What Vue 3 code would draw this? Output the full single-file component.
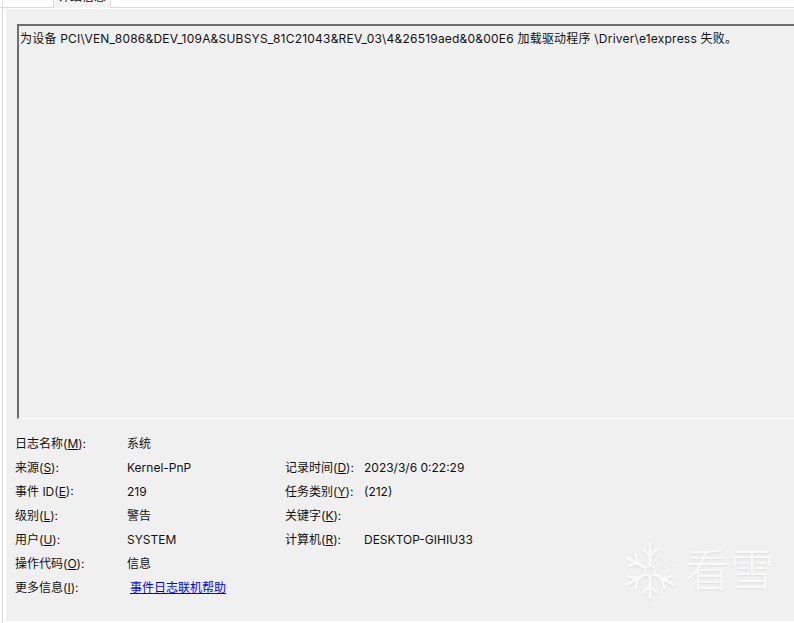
<script setup>
const rows = [
  { label: '日志名称', key: 'M', value: '系统' },
  { label: '来源', key: 'S', value: 'Kernel-PnP', label2: '记录时间', key2: 'D', value2: '2023/3/6 0:22:29' },
  { label: '事件 ID', key: 'E', value: '219', label2: '任务类别', key2: 'Y', value2: '(212)' },
  { label: '级别', key: 'L', value: '警告', label2: '关键字', key2: 'K', value2: '' },
  { label: '用户', key: 'U', value: 'SYSTEM', label2: '计算机', key2: 'R', value2: 'DESKTOP-GIHIU33' },
  { label: '操作代码', key: 'O', value: '信息' }
]
</script>

<template>
  <div class="page">
    <div class="tabstrip">
      <div class="tab"><span class="tabtext">详细信息</span></div>
    </div>
    <div class="panel">
      <div class="message">为设备 PCI\VEN_8086&amp;DEV_109A&amp;SUBSYS_81C21043&amp;REV_03\4&amp;26519aed&amp;0&amp;00E6 加载驱动程序 \Driver\e1express 失败。</div>
      <div class="details">
        <div v-for="r in rows" :key="r.key" class="row">
          <span class="c1">{{ r.label }}(<u>{{ r.key }}</u>):</span>
          <span class="c2">{{ r.value }}</span>
          <template v-if="r.label2">
            <span class="c3">{{ r.label2 }}(<u>{{ r.key2 }}</u>):</span>
            <span class="c4">{{ r.value2 }}</span>
          </template>
        </div>
        <div class="row">
          <span class="c1">更多信息(<u>I</u>):</span>
          <a class="link">事件日志联机帮助</a>
        </div>
      </div>
    </div>
    <div class="watermark">
      <svg class="flake" width="54" height="58" viewBox="0 0 54 58" fill="none" stroke="#fafafa" stroke-width="2.6">
        <polygon points="27,23.5 31.5,26 31.5,32 27,34.5 22.5,32 22.5,26" stroke-width="1.6" />
        <path d="M27 1V23.5M27 34.5V57M3 15L22.5 26M31.5 32L51 43M3 43L22.5 32" />
        <path d="M20 7L27 14L34 7M20 51L27 44L34 51M5 24L15 21L12 11M49 34L39 37L42 47M5 34L15 37L12 47" />
        <path d="M31.5 26L50 15M33 28L51 17.500M40 12L42 21L51 24M36 18L38 6" stroke-width="0.7" stroke="#f8f8f8" />
      </svg>
      <span class="brand">看雪</span>
    </div>
  </div>
</template>

<style>
html, body { margin: 0; background: #fff; }
</style>

<style scoped>
.page {
  position: relative;
  width: 794px;
  height: 623px;
  overflow: hidden;
  background: #fff;
  font-family: Inter, "Noto Sans CJK SC", sans-serif;
  font-size: 12px;
  color: #111;
  display: flex;
  flex-direction: column;
}
.page::before {
  content: "";
  position: absolute;
  left: 2px;
  top: 0;
  bottom: 0;
  width: 1px;
  background: #dcdcdc;
}
.tabstrip {
  height: 7px;
  border-bottom: 1px solid #d9d9d9;
  padding-left: 53px;
  margin-bottom: 1px;
}
.tab {
  width: 56px;
  height: 8px;
  border-left: 1px solid #d9d9d9;
  border-right: 1px solid #d9d9d9;
  background: #f4f4f4;
  overflow: hidden;
  position: relative;
}
.tabtext {
  position: absolute;
  left: 4px;
  top: -11px;
  line-height: 16px;
  white-space: nowrap;
}
.panel {
  margin-left: 6px;
  height: 612px;
  background: #f0f0f0;
  padding: 15px 0 0 11px;
  box-sizing: border-box;
}
.message {
  height: 395px;
  box-sizing: border-box;
  border-top: 2px solid #6e6e6e;
  border-left: 2px solid #6e6e6e;
  border-bottom: 1px solid #fff;
  padding: 4px 0 0 1px;
  line-height: 18px;
  white-space: nowrap;
  letter-spacing: 0.21px;
}
.details {
  margin-left: -2px;
  padding-top: 13px;
}
.row {
  display: flex;
  height: 24px;
  line-height: 24px;
  white-space: nowrap;
}
.c1 { width: 112px; }
.c2 { width: 158px; }
.c3 { width: 79px; }
.link {
  margin-left: 3px;
  color: #0000ff;
  text-decoration: underline;
}
.watermark {
  position: absolute;
  left: 623px;
  top: 542px;
  display: flex;
  align-items: center;
  gap: 8px;
}
.brand {
  color: #fafafa;
  font-size: 45px;
  line-height: 58px;
  font-weight: 300;
  letter-spacing: -0.5px;
  text-shadow: 0 1px 2px rgba(0,0,0,.08);
}
.flake { filter: drop-shadow(0 1px 1px rgba(0,0,0,.08)); }
</style>
